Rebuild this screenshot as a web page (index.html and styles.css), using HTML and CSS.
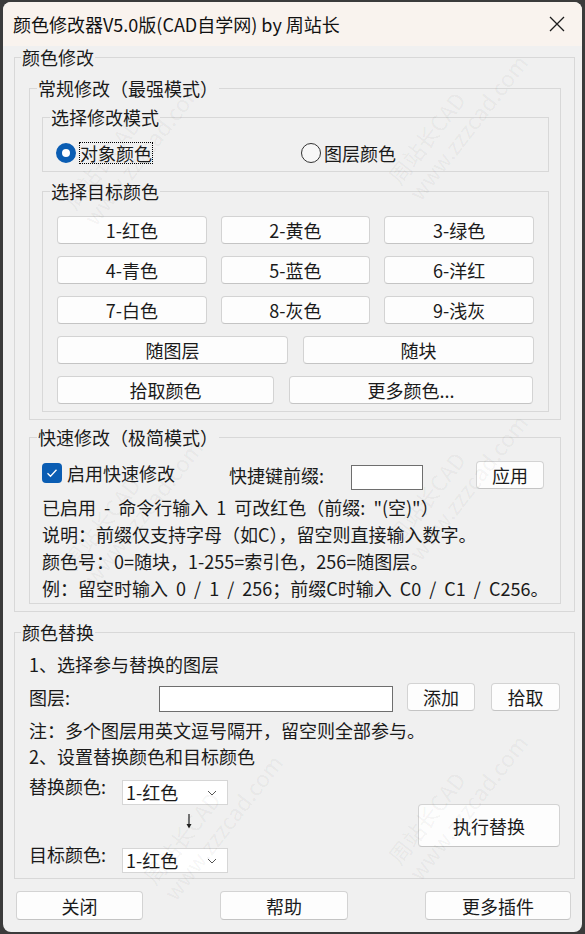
FILE: index.html
```html
<!DOCTYPE html>
<html>
<head>
    <meta charset="UTF-8">
    <title>颜色修改器V5.0版</title>
    <link rel="stylesheet" href="styles.css">
</head>
<body>
    <div class="window">
        <div class="titlebar">
            <span class="title">颜色修改器V5.0版(CAD自学网) by 周站长</span>
            <span class="close">
                <svg width="16" height="16" viewBox="0 0 16 16"><path d="M1 1L15 15M15 1L1 15" stroke="#1c1c1c" stroke-width="1.3" fill="none"/></svg>
            </span>
        </div>

        <div class="content">
            <fieldset class="group g-modify">
                <legend>颜色修改</legend>

                <fieldset class="group g-normal">
                    <legend>常规修改（最强模式）</legend>

                    <fieldset class="group g-mode">
                        <legend>选择修改模式</legend>
                        <div class="radios">
                            <label class="radio first"><span class="dot on"></span><span class="focus">对象颜色</span></label>
                            <label class="radio"><span class="dot"></span><span>图层颜色</span></label>
                        </div>
                    </fieldset>

                    <fieldset class="group g-target">
                        <legend>选择目标颜色</legend>
                        <div class="color-grid">
                            <button class="btn">1-红色</button>
                            <button class="btn">2-黄色</button>
                            <button class="btn">3-绿色</button>
                            <button class="btn">4-青色</button>
                            <button class="btn">5-蓝色</button>
                            <button class="btn">6-洋红</button>
                            <button class="btn">7-白色</button>
                            <button class="btn">8-灰色</button>
                            <button class="btn">9-浅灰</button>
                        </div>
                        <div class="row-bylayer">
                            <button class="btn">随图层</button>
                            <button class="btn">随块</button>
                        </div>
                        <div class="row-pick">
                            <button class="btn">拾取颜色</button>
                            <button class="btn">更多颜色...</button>
                        </div>
                    </fieldset>
                </fieldset>

                <fieldset class="group g-quick">
                    <legend>快速修改（极简模式）</legend>
                    <div class="quick-row">
                        <label class="check">
                            <span class="box"><svg width="12" height="10" viewBox="0 0 12 10"><path d="M1.5 5.2L4.5 8.2L10.5 1.8" stroke="#fff" stroke-width="1.3" fill="none"/></svg></span>
                            <span>启用快速修改</span>
                        </label>
                        <span class="prefix-label">快捷键前缀:</span>
                        <input class="text-input prefix-input" type="text">
                        <button class="btn btn-apply">应用</button>
                    </div>
                    <div class="info">
                        <p>已启用 - 命令行输入 1 可改红色（前缀: "(空)"）</p>
                        <p>说明：前缀仅支持字母（如C），留空则直接输入数字。</p>
                        <p>颜色号：0=随块，1-255=索引色，256=随图层。</p>
                        <p>例：留空时输入 0 / 1 / 256；前缀C时输入 C0 / C1 / C256。</p>
                    </div>
                </fieldset>
            </fieldset>

            <fieldset class="group g-replace">
                <legend>颜色替换</legend>
                <p class="line">1、选择参与替换的图层</p>
                <div class="layer-row">
                    <span class="layer-label">图层:</span>
                    <input class="text-input layer-input" type="text">
                    <button class="btn btn-small">添加</button>
                    <button class="btn btn-small pick">拾取</button>
                </div>
                <p class="line">注：多个图层用英文逗号隔开，留空则全部参与。</p>
                <p class="line">2、设置替换颜色和目标颜色</p>
                <div class="swap">
                    <div class="swap-left">
                        <div class="swap-row">
                            <span class="swap-label">替换颜色:</span>
                            <div class="select">1-红色<svg width="10" height="6" viewBox="0 0 10 6"><path d="M1 1L5 5L9 1" stroke="#555" stroke-width="1" fill="none"/></svg></div>
                        </div>
                        <div class="arrow-row">
                            <svg width="8" height="15" viewBox="0 0 8 15"><path d="M4 0V13" stroke="#222" stroke-width="1.2"/><path d="M1.5 10L4 14.5L6.5 10Z" fill="#222"/></svg>
                        </div>
                        <div class="swap-row">
                            <span class="swap-label">目标颜色:</span>
                            <div class="select">1-红色<svg width="10" height="6" viewBox="0 0 10 6"><path d="M1 1L5 5L9 1" stroke="#555" stroke-width="1" fill="none"/></svg></div>
                        </div>
                    </div>
                    <button class="btn btn-run">执行替换</button>
                </div>
            </fieldset>
        </div>

        <div class="footer">
            <button class="btn btn-close">关闭</button>
            <button class="btn btn-help">帮助</button>
            <button class="btn btn-more">更多插件</button>
        </div>

        <!-- 水印 -->
        <div class="wm" style="left: 95px; top: 175px;">周站长CAD<br>www.zzzcad.com</div>
        <div class="wm" style="left: 420px; top: 150px;">周站长CAD<br>www.zzzcad.com</div>
        <div class="wm" style="left: 95px; top: 535px;">周站长CAD<br>www.zzzcad.com</div>
        <div class="wm" style="left: 420px; top: 510px;">周站长CAD<br>www.zzzcad.com</div>
        <div class="wm" style="left: 175px; top: 850px;">周站长CAD<br>www.zzzcad.com</div>
        <div class="wm" style="left: 420px; top: 830px;">周站长CAD<br>www.zzzcad.com</div>
    </div>
</body>
</html>
```

FILE: styles.css
```css
* {
    margin: 0;
    padding: 0;
    box-sizing: border-box;
}
body {
    width: 585px;
    height: 934px;
    overflow: hidden;
    background: #3b3b3b;
    font-family: "Noto Sans CJK SC", sans-serif;
}
.window {
    position: relative;
    width: 579px;
    height: 930px;
    margin: 2px 0 0 3px;
    background: #f0f0f0;
    border-radius: 8px;
    overflow: hidden;
    color: #1a1a1a;
    font-size: 18px;
}
.titlebar {
    height: 44px;
    background: #f9f3ee;
    display: flex;
    align-items: center;
    justify-content: space-between;
    padding: 0 17px 0 10px;
}
.title {
    font-size: 18px;
    line-height: 24px;
    color: #111;
}
.close {
    width: 16px;
    height: 16px;
    display: flex;
}

.content {
    padding: 1px 7px 0 11px;
}

/* 分组框 */
.group {
    border: 1px solid #d8d8d8;
    min-width: 0;
}
.group legend {
    font-size: 18px;
    line-height: 20px;
    padding: 0 1px;
}
.g-modify {
    padding: 11px 13px 7px 14px;
}
.g-modify > legend {
    margin-left: -8px;
}
.g-normal {
    padding: 9px 11px 7px 12px;
}
.g-normal > legend {
    margin-left: -5px;
}
.g-mode {
    padding: 15px 13px 7px 13px;
}
.g-mode > legend {
    margin-left: -6px;
}
.g-target {
    margin-top: 9px;
    padding: 15px 14px 7px 14px;
}
.g-target > legend {
    margin-left: -7px;
}
.g-quick {
    margin-top: 7px;
    padding: 14px 12px 1px 12px;
}
.g-quick > legend {
    margin-left: -5px;
}
.g-replace {
    margin-top: 10px;
    padding: 9px 14px 5px 14px;
}
.g-replace > legend {
    margin-left: -8px;
}

/* 单选 */
.radios {
    display: flex;
    height: 22px;
    align-items: center;
}
.radio {
    display: flex;
    align-items: center;
    gap: 3px;
    line-height: 20px;
}
.radio.first {
    width: 245px;
}
.dot {
    width: 20px;
    height: 20px;
    border-radius: 50%;
    border: 1px solid #333;
    background: #f7f7f7;
}
.dot.on {
    border: 6px solid #0a5db3;
    background: #fff;
}
.focus {
    border: 1px dotted #000;
}

/* 按钮 */
.btn {
    font-family: "Noto Sans CJK SC", sans-serif;
    font-size: 18px;
    color: #1a1a1a;
    background: #fdfdfd;
    border: 1px solid #d3d3d3;
    border-bottom-color: #c4c4c4;
    border-radius: 4px;
    height: 28px;
    line-height: 24px;
}
.color-grid {
    display: grid;
    grid-template-columns: repeat(3, 1fr);
    gap: 12px 14px;
}
.row-bylayer {
    display: grid;
    grid-template-columns: 1fr 1fr;
    gap: 15px;
    margin-top: 12px;
}
.row-pick {
    display: grid;
    grid-template-columns: 217px 1fr;
    gap: 15px;
    margin-top: 12px;
    padding-right: 1px;
}

/* 快速修改 */
.quick-row {
    display: flex;
    align-items: flex-start;
    height: 29px;
}
.check {
    width: 187px;
    display: flex;
    align-items: center;
    gap: 5px;
    line-height: 20px;
    margin-top: 2px;
}
.box {
    width: 20px;
    height: 20px;
    border-radius: 4px;
    background: #0a5db3;
    display: flex;
    align-items: center;
    justify-content: center;
}
.prefix-label {
    width: 122px;
    line-height: 20px;
    margin-top: 4px;
}
.text-input {
    background: #fff;
    border: 1px solid #6e6e6e;
    outline: none;
}
.prefix-input {
    width: 72px;
    height: 25px;
    margin: 4px 53px 0 0;
}
.btn-apply {
    width: 68px;
}
.info {
    margin-top: 4px;
    line-height: 27px;
    white-space: nowrap;
    word-spacing: 4px;
}

/* 颜色替换 */
.line {
    line-height: 26px;
}
.layer-row {
    display: flex;
    align-items: center;
    height: 30px;
    margin: 5px 0;
}
.layer-label {
    width: 130px;
}
.layer-input {
    width: 234px;
    height: 26px;
    margin: 3px 14px 0 0;
}
.btn-small {
    width: 68px;
}
.btn-small.pick {
    width: 69px;
    margin-left: 16px;
}
.swap {
    display: flex;
    justify-content: space-between;
    align-items: center;
    margin-top: 9px;
}
.swap-row {
    display: flex;
    align-items: flex-start;
    height: 27px;
}
.swap-label {
    width: 93px;
    line-height: 20px;
    margin-top: -2px;
}
.select {
    width: 106px;
    height: 25px;
    margin-top: 2px;
    background: #fff;
    border: 1px solid #d6d6d6;
    display: flex;
    align-items: center;
    justify-content: space-between;
    padding: 0 10px 0 3px;
    line-height: 23px;
}
.arrow-row {
    height: 41px;
    padding: 9px 0 0 156px;
}
.arrow-row svg {
    display: block;
}
.btn-run {
    width: 142px;
    height: 43px;
}

/* 底部按钮 */
.footer {
    display: flex;
    justify-content: space-between;
    padding: 12px 11px 0 13px;
}
.footer .btn {
    height: 29px;
}
.btn-close {
    width: 127px;
}
.btn-help {
    width: 128px;
}
.btn-more {
    width: 146px;
}

/* 水印 */
.wm {
    position: absolute;
    font-size: 22px;
    line-height: 26px;
    color: rgba(0, 0, 0, 0.05);
    transform: rotate(-52deg);
    transform-origin: left bottom;
    white-space: nowrap;
    pointer-events: none;
}
```
